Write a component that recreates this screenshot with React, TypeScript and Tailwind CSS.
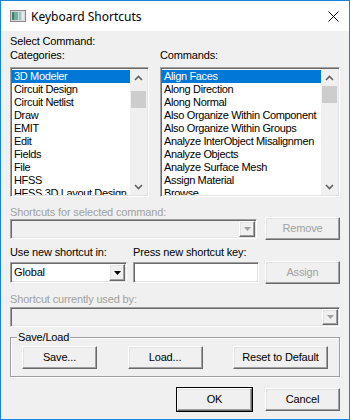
import React from "react";

const categories = [
  "3D Modeler",
  "Circuit Design",
  "Circuit Netlist",
  "Draw",
  "EMIT",
  "Edit",
  "Fields",
  "File",
  "HFSS",
  "HFSS 3D Layout Design",
];

const commands = [
  "Align Faces",
  "Along Direction",
  "Along Normal",
  "Also Organize Within Component",
  "Also Organize Within Groups",
  "Analyze InterObject Misalignmen",
  "Analyze Objects",
  "Analyze Surface Mesh",
  "Assign Material",
  "Browse",
];

const sunken =
  "border border-t-[#a0a0a0] border-l-[#a0a0a0] border-b-white border-r-white shadow-[inset_1px_1px_0_#696969,inset_-1px_-1px_0_#e3e3e3]";

const raised =
  "border border-t-white border-l-white border-b-[#696969] border-r-[#696969] shadow-[inset_-1px_-1px_0_#a0a0a0,inset_1px_1px_0_#e3e3e3]";

const Chevron = ({ up, color = "#606060" }: { up?: boolean; color?: string }) => (
  <svg width="9" height="6" viewBox="0 0 9 6">
    <path
      d={up ? "M1 5 L4.5 1.5 L8 5" : "M1 1 L4.5 4.5 L8 1"}
      fill="none"
      stroke={color}
      strokeWidth="1.6"
    />
  </svg>
);

const ScrollBar = ({ thumbTop }: { thumbTop: number }) => (
  <div className="w-[17px] h-full bg-[#f0f0f0] flex flex-col shrink-0">
    <div className="h-[17px] flex items-center justify-center">
      <Chevron up />
    </div>
    <div className="flex-1 relative">
      <div
        className="absolute left-[1px] right-[1px] h-[17px] bg-[#cdcdcd]"
        style={{ top: thumbTop }}
      />
    </div>
    <div className="h-[17px] flex items-center justify-center">
      <Chevron />
    </div>
  </div>
);

const ListBox = ({ items, thumbTop, w }: { items: string[]; thumbTop: number; w: string }) => (
  <div className={`${w} h-[130px] bg-white ${sunken} p-[1px] flex`}>
    <div className="flex-1 overflow-hidden pt-[1px] tracking-[-0.35px]">
      {items.map((it, i) => (
        <div
          key={it}
          className={`h-[13px] leading-[13px] pl-[2px] whitespace-nowrap ${
            i === 0 ? "bg-[#0078d7] text-white" : "text-black"
          }`}
        >
          {it}
        </div>
      ))}
    </div>
    <ScrollBar thumbTop={thumbTop} />
  </div>
);

const DropArrow = ({ disabled }: { disabled?: boolean }) => (
  <div className={`w-[16px] h-full flex items-center justify-center bg-[#f0f0f0] ${raised}`}>
    <svg width="7" height="4" viewBox="0 0 7 4">
      <path d="M0 0 H7 L3.5 4 Z" fill={disabled ? "#a0a0a0" : "#000"} />
    </svg>
  </div>
);

const Button = ({
  label,
  w = "w-[75px]",
  disabled,
  primary,
}: {
  label: string;
  w?: string;
  disabled?: boolean;
  primary?: boolean;
}) => (
  <div className={`${w} h-[23px] ${primary ? "outline outline-1 outline-black" : ""}`}>
    <div
      className={`w-full h-full bg-[#f0f0f0] ${raised} flex items-center justify-center ${
        disabled ? "text-[#a0a0a0]" : "text-black"
      }`}
    >
      {label}
    </div>
  </div>
);

export default function App() {
  return (
    <div
      className="w-[350px] h-[420px] border border-[#1883d7] flex flex-col text-[11px] leading-[13px] tracking-[-0.15px]"
      style={{ fontFamily: '"Liberation Sans", Arial, sans-serif' }}
    >
      {/* Title bar */}
      <div className="h-[30px] bg-white flex items-center pl-[9px] pr-[8px] shrink-0 tracking-normal">
        <svg width="16" height="12" viewBox="0 0 16 12" className="mr-[5px]">
          <rect x="0.5" y="0.5" width="15" height="11" fill="#d9d9d9" stroke="#8a8a8a" />
          <rect x="2" y="2" width="6" height="8" fill="#3d7a6a" />
          <rect x="4" y="2" width="4" height="8" fill="#6fae9a" />
          <rect x="9" y="2" width="2" height="8" fill="#9fbfcf" />
          <rect x="12" y="2" width="2" height="8" fill="#e8e8e8" />
        </svg>
        <span
          className="text-[12px] text-black flex-1"
          style={{ fontFamily: '"Noto Sans", "Open Sans", sans-serif' }}
        >
          Keyboard Shortcuts
        </span>
        <svg width="11" height="11" viewBox="0 0 11 11" className="mr-[2px]">
          <path d="M0.5 0.5 L10.5 10.5 M10.5 0.5 L0.5 10.5" stroke="#000" strokeWidth="1" />
        </svg>
      </div>

      {/* Body */}
      <div className="flex-1 bg-[#f0f0f0] px-[9px] pt-[4px] flex flex-col">
        <div className="h-[13px]">Select Command:</div>
        <div className="flex mt-[1px] gap-[11px]">
          <div className="flex flex-col">
            <div className="h-[13px]">Categories:</div>
            <div className="mt-[5px]">
              <ListBox items={categories} thumbTop={5} w="w-[139px]" />
            </div>
          </div>
          <div className="flex flex-col">
            <div className="h-[13px]">Commands:</div>
            <div className="mt-[5px]">
              <ListBox items={commands} thumbTop={0} w="w-[180px]" />
            </div>
          </div>
        </div>

        <div className="h-[13px] mt-[9px] text-[#a0a0a0]">Shortcuts for selected command:</div>
        <div className="flex items-center justify-between mt-[-2px]">
          <div className={`w-[247px] h-[20px] bg-[#f0f0f0] ${sunken} p-[1px] flex justify-end`}>
            <DropArrow disabled />
          </div>
          <Button label="Remove" disabled />
        </div>

        <div className="flex mt-[6px]">
          <div className="w-[123px] h-[13px]">Use new shortcut in:</div>
          <div className="h-[13px]">Press new shortcut key:</div>
        </div>
        <div className="flex items-center mt-[2px]">
          <div className={`w-[117px] h-[21px] bg-white ${sunken} p-[1px] flex`}>
            <div className="flex-1 pl-[2px] leading-[17px]">Global</div>
            <DropArrow />
          </div>
          <div className={`ml-[6px] w-[126px] h-[21px] bg-white ${sunken}`} />
          <div className="ml-auto">
            <Button label="Assign" disabled />
          </div>
        </div>

        <div className="h-[13px] mt-[9px] text-[#a0a0a0]">Shortcut currently used by:</div>
        <div className={`mt-[1px] w-full h-[20px] bg-[#f0f0f0] ${sunken} p-[1px] flex justify-end`}>
          <DropArrow disabled />
        </div>

        {/* Save/Load group */}
        <div className="mt-[10px] h-[40px] border border-[#a0a0a0] shadow-[1px_1px_0_#fff,inset_1px_1px_0_#fff] relative flex items-center justify-between px-[11px] pt-[1px]">
          <div className="absolute left-[6px] top-[-7px] bg-[#f0f0f0] px-[1px] h-[13px]">Save/Load</div>
          <Button label="Save..." />
          <Button label="Load..." />
          <Button label="Reset to Default" w="w-[95px]" />
        </div>

        <div className="flex justify-end gap-[13px] mt-[11px]">
          <Button label="OK" primary />
          <Button label="Cancel" />
        </div>
      </div>
    </div>
  );
}
